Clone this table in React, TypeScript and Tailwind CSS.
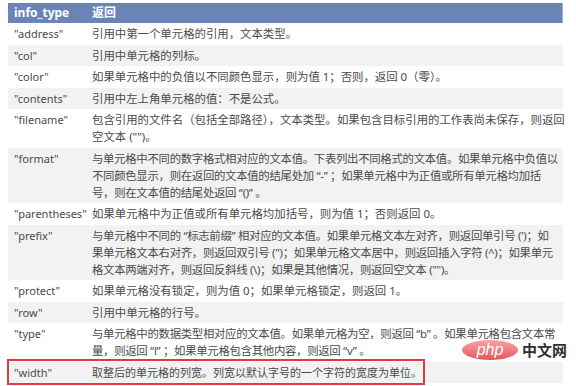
const rows: { key: string; lines: string[]; tight?: boolean }[] = [
  { key: '"address"', lines: ["引用中第一个单元格的引用，文本类型。"] },
  { key: '"col"', lines: ["引用中单元格的列标。"] },
  { key: '"color"', lines: ["如果单元格中的负值以不同颜色显示，则为值 1；否则，返回 0（零）。"] },
  { key: '"contents"', lines: ["引用中左上角单元格的值：不是公式。"] },
  {
    key: '"filename"',
    lines: [
      "包含引用的文件名（包括全部路径），文本类型。如果包含目标引用的工作表尚未保存，则返回",
      '空文本 ("")。',
    ],
  },
  {
    key: '"format"',
    tight: true,
    lines: [
      "与单元格中不同的数字格式相对应的文本值。下表列出不同格式的文本值。如果单元格中负值以",
      "不同颜色显示，则在返回的文本值的结尾处加 “-” ；如果单元格中为正值或所有单元格均加括",
      "号，则在文本值的结尾处返回 “()” 。",
    ],
  },
  { key: '"parentheses"', lines: ["如果单元格中为正值或所有单元格均加括号，则为值 1；否则返回 0。"] },
  {
    key: '"prefix"',
    tight: true,
    lines: [
      "与单元格中不同的 “标志前缀” 相对应的文本值。如果单元格文本左对齐，则返回单引号 (')；如",
      '果单元格文本右对齐，则返回双引号 (")；如果单元格文本居中，则返回插入字符 (^)；如果单元',
      '格文本两端对齐，则返回反斜线 (\\)；如果是其他情况，则返回空文本 ("")。',
    ],
  },
  { key: '"protect"', lines: ["如果单元格没有锁定，则为值 0；如果单元格锁定，则返回 1。"] },
  { key: '"row"', lines: ["引用中单元格的行号。"] },
  {
    key: '"type"',
    tight: true,
    lines: [
      "与单元格中的数据类型相对应的文本值。如果单元格为空，则返回 “b” 。如果单元格包含文本常",
      "量，则返回 “l” ；如果单元格包含其他内容，则返回 “v” 。",
    ],
  },
  { key: '"width"', lines: ["取整后的单元格的列宽。列宽以默认字号的一个字符的宽度为单位。"] },
];

const font = { fontFamily: '"Noto Sans", "Noto Sans CJK SC", sans-serif' };

export default function App() {
  return (
    <div className="relative h-[386px] w-[576px] overflow-hidden bg-white pt-[3px]" style={font}>
      <div className="ml-[8px] w-[555px] text-[11px] text-[#4a4a4a]">
        <div className="flex h-[20px] items-center bg-[#6a84b8] text-[12px] font-bold text-white shadow-[inset_-1px_0_0_#9fb0d4]">
          <div className="w-[78px] px-[6px]">info_type</div>
          <div className="flex-1 px-[6px]">返回</div>
        </div>
        {rows.map((r, i) => (
          <div
            key={r.key}
            className={`flex py-[2.25px] leading-[17px] ${i % 2 === 1 ? "bg-[#f2f2f2]" : "bg-white"}`}
          >
            <div className="w-[78px] shrink-0 whitespace-nowrap pl-[6px]">{r.key}</div>
            <div
              className={`flex-1 px-[6px] ${r.key === '"width"' ? "text-[11px]" : "text-[11.4px]"} ${
                r.tight ? "tracking-[-0.3px]" : ""
              }`}
            >
              {r.lines.map((l) => (
                <div key={l} className="whitespace-nowrap">
                  {l}
                </div>
              ))}
            </div>
          </div>
        ))}
      </div>

      <div className="absolute left-[7px] top-[359px] h-[26px] w-[418px] border-2 border-[#e23a40]" />

      <div className="absolute left-[462px] top-[340px] flex items-center gap-[4px]">
        <div className="flex h-[20px] w-[56px] items-center justify-center rounded-[50%] bg-gradient-to-b from-[#f5a3a8] to-[#e5535a]">
          <span className="text-[16px] italic leading-none text-white" style={{ fontFamily: '"Liberation Sans", sans-serif' }}>
            php
          </span>
        </div>
        <span className="text-[15px] font-bold leading-none text-[#2f2f2f]">中文网</span>
      </div>
    </div>
  );
}
